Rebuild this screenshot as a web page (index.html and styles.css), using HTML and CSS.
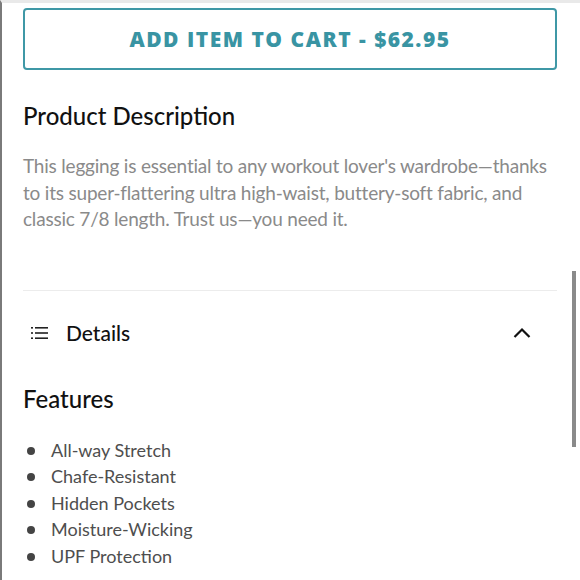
FILE: index.html
```html
<!DOCTYPE html>
<html lang="en">
<head>
  <meta charset="UTF-8">
  <meta name="viewport" content="width=device-width, initial-scale=1.0">
  <title>Product</title>
  <link rel="stylesheet" href="styles.css">
</head>
<body>
<div class="page">
  <button class="cart-btn">ADD ITEM TO CART - $62.95</button>

  <section class="description">
    <h2>Product Description</h2>
    <p>This legging is essential to any workout lover's wardrobe—thanks to its super-flattering ultra high-waist, buttery-soft fabric, and classic 7/8 length. Trust us—you need it.</p>
  </section>

  <div class="accordion">
    <div class="accordion-head">
      <svg class="list-icon" width="18" height="16" viewBox="0 0 18 16">
        <rect x="0" y="2" width="2" height="1.6" fill="#222"/>
        <rect x="4" y="2" width="13" height="1.6" fill="#222"/>
        <rect x="0" y="7.2" width="2" height="1.6" fill="#222"/>
        <rect x="4" y="7.2" width="13" height="1.6" fill="#222"/>
        <rect x="0" y="12.4" width="2" height="1.6" fill="#222"/>
        <rect x="4" y="12.4" width="13" height="1.6" fill="#222"/>
      </svg>
      <span class="accordion-title">Details</span>
      <svg class="chevron" width="18" height="12" viewBox="0 0 18 12">
        <path d="M1.5 10 L9 2.5 L16.5 10" fill="none" stroke="#111" stroke-width="2.2"/>
      </svg>
    </div>

    <div class="accordion-body">
      <h3>Features</h3>
      <ul class="features">
        <li>All-way Stretch</li>
        <li>Chafe-Resistant</li>
        <li>Hidden Pockets</li>
        <li>Moisture-Wicking</li>
        <li>UPF Protection</li>
      </ul>
    </div>
  </div>
</div>
<div class="scroll-thumb"></div>
</body>
</html>
```

FILE: styles.css
```css
* {
  margin: 0;
  padding: 0;
  box-sizing: border-box;
}
html, body {
  height: 100%;
}
body {
  font-family: Lato, 'Noto Sans', sans-serif;
  background-color: #ffffff;
  color: #111111;
  border-top: 3px solid #e9e9e9;
  border-left: 2px solid #7a7a7a;
  overflow: hidden;
}
.page {
  padding: 5px 23px 0 21px;
}
.cart-btn {
  display: block;
  width: 100%;
  height: 62px;
  border: 2px solid #3f98a6;
  border-radius: 4px;
  background: #ffffff;
  color: #3994a3;
  font-family: 'Open Sans', sans-serif;
  font-weight: 800;
  font-size: 21px;
  letter-spacing: 1.5px;
}
.description {
  margin-top: 31px;
  padding-bottom: 57px;
  border-bottom: 1px solid #ececec;
}
.description h2 {
  font-size: 24px;
  font-weight: 500;
  line-height: 30px;
}
.description p {
  margin-top: 22px;
  font-size: 19px;
  letter-spacing: -0.2px;
  line-height: 26.5px;
  color: #8a8a8a;
}
.accordion-head {
  display: flex;
  align-items: center;
  height: 84px;
  padding: 0 26px 0 8px;
}
.list-icon {
  margin-right: 17px;
}
.accordion-title {
  flex: 1;
  font-size: 21px;
  font-weight: 500;
}
.accordion-body {
  padding-top: 9px;
}
.accordion-body h3 {
  font-size: 24px;
  font-weight: 500;
  line-height: 30px;
  margin-bottom: 23px;
}
.features {
  list-style: none;
}
.features li {
  position: relative;
  padding-left: 28px;
  font-size: 18px;
  line-height: 26.5px;
  color: #4e4e4e;
}
.features li::before {
  content: '';
  position: absolute;
  left: 4px;
  top: 10px;
  width: 8px;
  height: 8px;
  border-radius: 50%;
  background-color: #444444;
}
.scroll-thumb {
  position: absolute;
  top: 271px;
  left: 572px;
  width: 4px;
  height: 176px;
  background-color: #8a8a8a;
}
```
